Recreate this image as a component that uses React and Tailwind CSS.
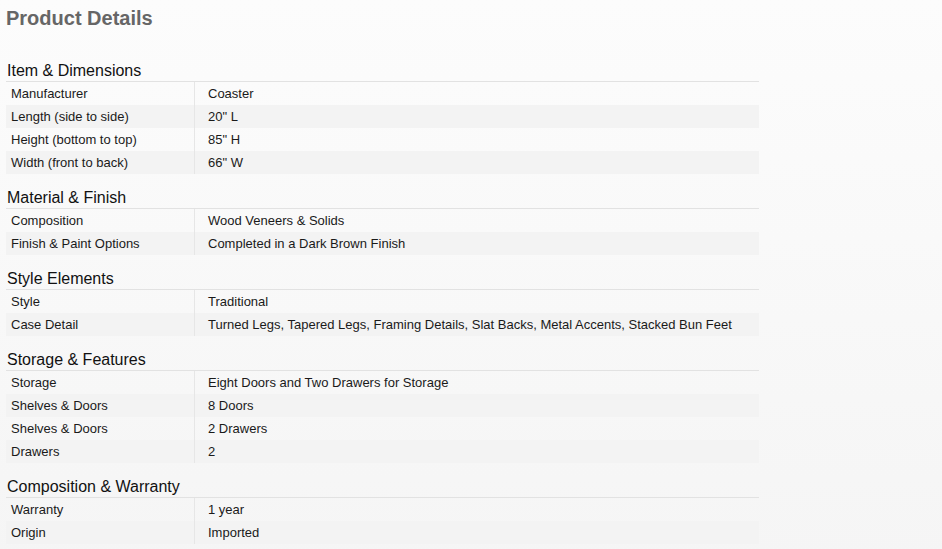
import React from 'react';

const sections = [
  {
    title: 'Item & Dimensions',
    rows: [
      ['Manufacturer', 'Coaster'],
      ['Length (side to side)', '20" L'],
      ['Height (bottom to top)', '85" H'],
      ['Width (front to back)', '66" W'],
    ],
  },
  {
    title: 'Material & Finish',
    rows: [
      ['Composition', 'Wood Veneers & Solids'],
      ['Finish & Paint Options', 'Completed in a Dark Brown Finish'],
    ],
  },
  {
    title: 'Style Elements',
    rows: [
      ['Style', 'Traditional'],
      ['Case Detail', 'Turned Legs, Tapered Legs, Framing Details, Slat Backs, Metal Accents, Stacked Bun Feet'],
    ],
  },
  {
    title: 'Storage & Features',
    rows: [
      ['Storage', 'Eight Doors and Two Drawers for Storage'],
      ['Shelves & Doors', '8 Doors'],
      ['Shelves & Doors', '2 Drawers'],
      ['Drawers', '2'],
    ],
  },
  {
    title: 'Composition & Warranty',
    rows: [
      ['Warranty', '1 year'],
      ['Origin', 'Imported'],
    ],
  },
];

function Section({ title, rows }) {
  return (
    <div className="w-[753px]">
      <h3 className="h-[20px] pl-px text-[16px] leading-[17px] text-[#111] border-b border-[#e2e2e2]">{title}</h3>
      {rows.map(([label, value], i) => (
        <div key={i} className={`flex h-[23px] items-center text-[13px] text-[#1a1a1a] ${i % 2 === 1 ? 'bg-[#f3f3f3]' : ''}`}>
          <div className="w-[188px] h-full flex items-center pl-[5px]">{label}</div>
          <div className="h-full flex items-center border-l border-[#e6e6e6] pl-[13px]">{value}</div>
        </div>
      ))}
    </div>
  );
}

export default function App() {
  return (
    <div className="min-h-screen bg-gradient-to-b from-[#fcfcfc] to-[#f5f5f5] pl-[6px] pt-[6px] pb-4" style={{ fontFamily: '"Liberation Sans", Arial, sans-serif' }}>
      <h2 className="text-[20px] leading-[24px] font-bold text-[#666]">Product Details</h2>
      <div className="mt-[32px] flex flex-col gap-[15px]">
        {sections.map((s) => (
          <Section key={s.title} {...s} />
        ))}
      </div>
    </div>
  );
}
